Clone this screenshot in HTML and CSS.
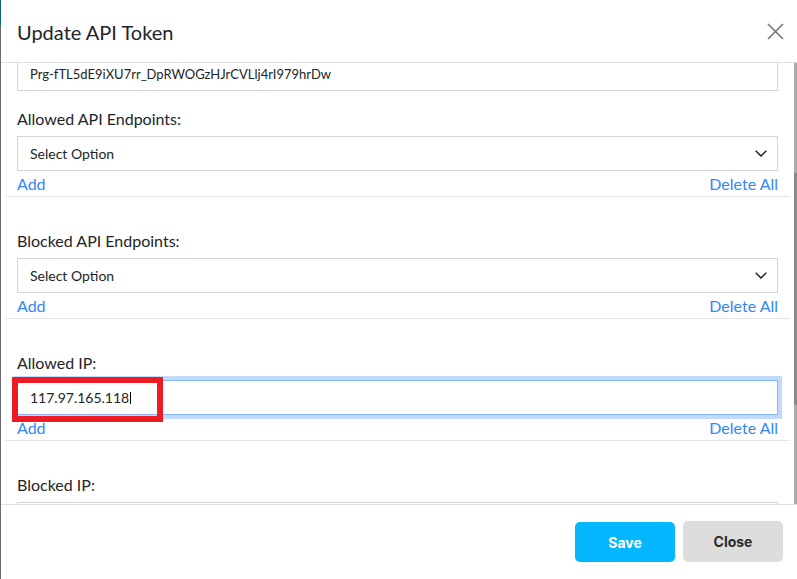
FILE: index.html
```html
<!DOCTYPE html>
<html lang="en">
<head>
<meta charset="utf-8">
<title>Update API Token</title>
<link rel="stylesheet" href="styles.css">
</head>
<body>
<div class="backdrop-edge"><div class="edge-top"></div><div class="edge-rest"></div></div>
<div class="modal">
  <header class="modal-header">
    <h1 class="modal-title">Update API Token</h1>
    <button class="close-x" aria-label="Close">
      <svg width="17" height="17" viewBox="0 0 17 17"><path d="M1 1 L16 16 M16 1 L1 16" stroke="#777" stroke-width="1.6" fill="none"/></svg>
    </button>
  </header>
  <div class="modal-main">
    <div class="modal-body">
      <div class="field-token">
        <div class="control token">Prg-fTL5dE9iXU7rr_DpRWOGzHJrCVLlj4rI979hrDw</div>
      </div>
      <section class="section">
        <label class="label">Allowed API Endpoints:</label>
        <div class="control select"><span>Select Option</span>
          <svg width="12" height="7" viewBox="0 0 12 7"><path d="M0.7 0.7 L6 6 L11.3 0.7" stroke="#222" stroke-width="1.5" fill="none"/></svg>
        </div>
        <div class="links"><a>Add</a><a>Delete All</a></div>
      </section>
      <section class="section">
        <label class="label">Blocked API Endpoints:</label>
        <div class="control select"><span>Select Option</span>
          <svg width="12" height="7" viewBox="0 0 12 7"><path d="M0.7 0.7 L6 6 L11.3 0.7" stroke="#222" stroke-width="1.5" fill="none"/></svg>
        </div>
        <div class="links"><a>Add</a><a>Delete All</a></div>
      </section>
      <section class="section">
        <label class="label">Allowed IP:</label>
        <div class="input-wrap">
          <div class="control focused"><span>117.97.165.118</span><span class="caret"></span></div>
          <div class="annotation"></div>
        </div>
        <div class="links"><a>Add</a><a>Delete All</a></div>
      </section>
      <section class="section">
        <label class="label">Blocked IP:</label>
        <div class="control"></div>
      </section>
    </div>
    <div class="scrollbar"><div class="sb-track-top"></div><div class="sb-thumb"></div><div class="sb-track-bottom"></div></div>
  </div>
  <footer class="modal-footer">
    <button class="btn btn-save">Save</button>
    <button class="btn btn-close">Close</button>
  </footer>
</div>
</body>
</html>
```

FILE: styles.css
```css
* { box-sizing: border-box; }
html, body { margin: 0; padding: 0; }
body {
  width: 797px;
  height: 579px;
  overflow: hidden;
  display: flex;
  background: #fff;
  font-family: Lato, "Liberation Sans", sans-serif;
  color: #212529;
}
.backdrop-edge { width: 1px; display: flex; flex-direction: column; }
.edge-top { height: 25px; background: #0f6573; }
.edge-rest { flex: 1; background: #6b6b6b; }

.modal { flex: 1; display: flex; flex-direction: column; background: #fff; min-width: 0; }

.modal-header {
  height: 63px;
  flex: none;
  border-bottom: 1px solid #dcdfe3;
  display: flex;
  align-items: center;
  justify-content: space-between;
  padding: 0 13px 0 16px;
}
.modal-title { margin: 0; font-size: 20px; font-weight: 400; color: #212529; line-height: 24px; padding-top: 1px; }
.close-x { border: 0; background: none; padding: 0; width: 17px; height: 17px; display: flex; margin-top: 0; }

.modal-main { height: 441px; flex: none; display: flex; overflow: hidden; }
.modal-body { flex: 1; padding: 0 4px; overflow: hidden; }

.scrollbar { width: 3px; flex: none; display: flex; flex-direction: column; }
.sb-track-top { height: 110px; background: #ababab; }
.sb-thumb { height: 232px; background: #8a8a8a; }
.sb-track-bottom { flex: 1; background: #ababab; }

.field-token { padding: 0 12px; margin-top: -7px; margin-bottom: 18px; }

.control {
  height: 35px;
  border: 1px solid #d2d5dc;
  display: flex;
  align-items: center;
  padding: 0 10px 0 12px;
  font-size: 14px;
  color: #212529;
  background: #fff;
}
.control.token { font-size: 13px; }
.select { justify-content: space-between; }
.focused {
  border-color: #86b7fb;
  box-shadow: 0 0 0 4px #c2dafb;
}
.caret { display: inline-block; width: 1px; height: 12px; background: #000; margin-left: 1px; }

.section { padding: 0 12px 1px 12px; border-bottom: 1px solid #e4e6e9; }
.section + .section { padding-top: 34px; }
.label { display: block; font-size: 16px; line-height: 20px; margin-bottom: 7px; color: #212529; }

.links { display: flex; justify-content: space-between; margin-top: 2px; line-height: 22px; font-size: 16px; }
.links a { color: #2f88f6; cursor: pointer; }

.input-wrap { position: relative; }
.annotation {
  position: absolute;
  left: -5px;
  top: -3px;
  width: 151px;
  height: 45px;
  border: 6px solid #ed1c24;
  pointer-events: none;
}

.modal-footer {
  flex: 1;
  border-top: 1px solid #dcdfe3;
  display: flex;
  justify-content: flex-end;
  align-items: flex-start;
  gap: 8px;
  padding: 17px 14px 0 0;
}
.btn {
  width: 100px;
  height: 40px;
  border: 0;
  border-radius: 5px;
  font-family: Inter, "Liberation Sans", sans-serif;
  font-weight: 700;
  font-size: 14px;
}
.btn-save { background: #04b6fe; color: #fff; }
.btn-close { background: #dddddd; color: #2b2b2b; height: 41px; margin-top: -1px; }
```
